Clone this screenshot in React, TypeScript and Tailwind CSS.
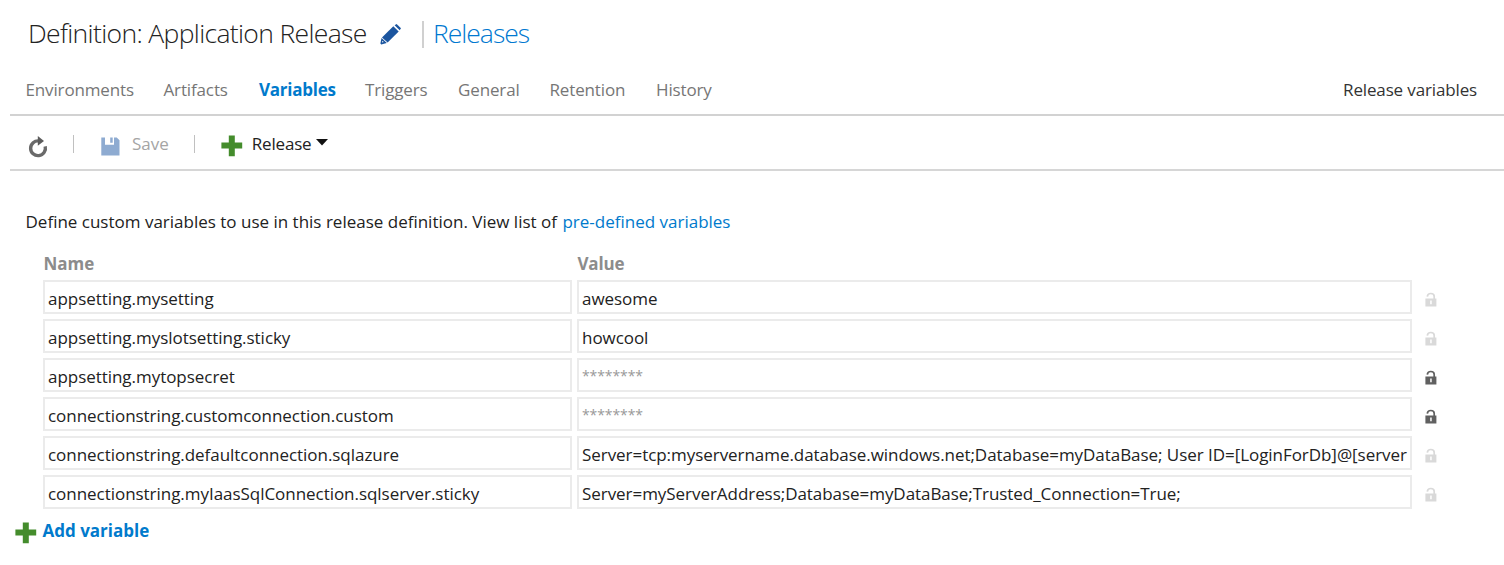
import React from "react";

const tabs = [
  { label: "Environments", cls: "w-[138px]" },
  { label: "Artifacts", cls: "w-[95.5px]" },
  { label: "Variables", cls: "w-[106px]", active: true },
  { label: "Triggers", cls: "w-[93px]" },
  { label: "General", cls: "w-[91.5px]" },
  { label: "Retention", cls: "w-[106.5px]" },
  { label: "History", cls: "w-[60px]" },
];

const rows = [
  { name: "appsetting.mysetting", value: "awesome" },
  { name: "appsetting.myslotsetting.sticky", value: "howcool" },
  { name: "appsetting.mytopsecret", value: "********", secret: true },
  { name: "connectionstring.customconnection.custom", value: "********", secret: true },
  {
    name: "connectionstring.defaultconnection.sqlazure",
    value: "Server=tcp:myservername.database.windows.net;Database=myDataBase; User ID=[LoginForDb]@[server",
  },
  {
    name: "connectionstring.myIaasSqlConnection.sqlserver.sticky",
    value: "Server=myServerAddress;Database=myDataBase;Trusted_Connection=True;",
  },
];

function Pencil() {
  return (
    <svg className="mt-[23px] ml-[13px] h-[22px] w-[22px] shrink-0" viewBox="0 0 22 22" fill="#1b559f">
      <path d="M14.6 2.2 16.6.9l4.4 4.4-1.3 2-5.1-5.1z" />
      <path d="m13.3 3.2 5.4 5.4L7.6 19.6l-5.6-5.2z" />
      <path fillRule="evenodd" d="m1.5 15 5.3 5.1-5.6 1.3-.8-.8zm.9 2.7-.4 1.7 1.7-.5z" />
    </svg>
  );
}

function Plus() {
  return (
    <svg className="h-[22px] w-[22px] shrink-0" viewBox="0 0 22 22" fill="#448c2c">
      <path d="M7.8.6h6v7h7.4v6h-7.4v7.6h-6v-7.6H.4v-6h7.4z" />
    </svg>
  );
}

function Refresh() {
  return (
    <svg className="mt-[20px] h-[22px] w-[20px] shrink-0" viewBox="0 0 20 22" fill="none">
      <path d="M11 4.9A7.4 7.4 0 1 0 17.2 10.4" stroke="#6a6a6a" strokeWidth="3.4" />
      <path d="M9.8 0 16 5 9.8 9.8z" fill="#5c5c5c" />
    </svg>
  );
}

function Disk() {
  return (
    <svg className="mt-[21px] h-[19px] w-[19px] shrink-0" viewBox="0 0 19 19" fill="#8eabd1">
      <path fillRule="evenodd" d="M.3.5H4v7.2h9V.5h2.7l2.8 2.8v15.2H.3zM9.2.5h2.5v5.2H9.2z" />
    </svg>
  );
}

function Lock({ dark }: { dark?: boolean }) {
  return (
    <svg
      className={"mt-[12px] ml-[13px] h-[15px] w-[12px] shrink-0 " + (dark ? "text-[#606060]" : "text-[#d9d9d9]")}
      viewBox="0 0 12 15"
      fill="none"
    >
      <path d="M2.3 4.6C2.5 2.2 4 1.5 5.8 1.5S9.2 2.5 9.2 4.4V7" stroke="currentColor" strokeWidth="1.7" />
      <path fillRule="evenodd" d="M.4 6.6h11v8H.4zM5.2 8.4v3.8h1.5V8.4z" fill="currentColor" />
    </svg>
  );
}

export default function App() {
  return (
    <div className="h-[565px] w-[1504px] overflow-hidden bg-white font-['Open_Sans',sans-serif] text-[17px] leading-6 whitespace-nowrap text-[#222]">
      <header className="flex h-[76px] pl-[28px]">
        <h1 className="mt-[15px] w-[339px] text-[26.5px] leading-9 font-light tracking-[-0.65px] text-[#222]">
          Definition: Application Release
        </h1>
        <Pencil />
        <div className="mt-[21px] ml-[20px] h-[27px] w-[2px] bg-[#d0d0d0]" />
        <a className="mt-[15px] ml-[9px] text-[26.5px] leading-9 font-light tracking-[-1px] text-[#0078d0]">Releases</a>
      </header>

      <nav className="flex h-[38px] pt-[2px] pl-[25.5px]">
        {tabs.map((t) => (
          <span
            key={t.label}
            className={t.cls + (t.active ? " font-bold tracking-[-0.25px] text-[#007acc]" : " tracking-[-0.14px] text-[#767676]")}
          >
            {t.label}
          </span>
        ))}
        <span className="mr-[27px] ml-auto tracking-[-0.14px] text-[#333]">Release variables</span>
      </nav>

      <div className="ml-[10px] flex h-[57px] border-y-2 border-t-[#d2d2d2] border-b-[#d6d6d6] pl-[18px]">
        <Refresh />
        <div className="mt-[19px] ml-[25px] h-[18px] w-px bg-[#c0c0c0]" />
        <div className="ml-[27px] flex">
          <Disk />
          <span className="mt-[16px] ml-[12px] text-[#a5a5a5]">Save</span>
        </div>
        <div className="mt-[19px] ml-[25px] h-[18px] w-px bg-[#c0c0c0]" />
        <div className="ml-[26px] flex">
          <div className="mt-[19px]">
            <Plus />
          </div>
          <span className="mt-[16px] ml-[9px] w-[64px] tracking-[-0.2px]">Release</span>
          <svg className="mt-[23px] h-[7px] w-[12px]" viewBox="0 0 12 7" fill="#111">
            <path d="M0 0h12L6 6.5z" />
          </svg>
        </div>
      </div>

      <main>
        <p className="mt-[39px] pl-[25.5px]">
          Define custom variables to use in this release definition. View list of{" "}
          <a className="ml-[1px] text-[#007acc]">pre-defined variables</a>
        </p>
        <div className="mt-[18px] flex pl-[43.5px] font-bold text-[#8c8c8c]">
          <span className="w-[534px]">Name</span>
          <span className="tracking-[-0.2px]">Value</span>
        </div>
        <div className="mt-[4px] flex flex-col gap-[5px] pl-[43px]">
          {rows.map((r) => (
            <div key={r.name} className="flex h-[34px]">
              <div className="h-[34px] w-[529px] overflow-hidden border-2 border-[#ebebeb] pt-[5px] pl-[3px] tracking-[-0.04px]">
                {r.name}
              </div>
              <div
                className={
                  "ml-[5px] h-[34px] w-[835px] border-2 border-[#ebebeb] pl-[3px] " +
                  (r.secret ? "pt-[4px] text-[14px] tracking-[-0.1px] text-[#999]" : "pt-[5px] tracking-[-0.05px]")
                }
              >
                {r.value}
              </div>
              <Lock dark={r.secret} />
            </div>
          ))}
        </div>
        <div className="mt-[9px] flex pl-[15px]">
          <div className="mt-[4px]">
            <Plus />
          </div>
          <a className="mt-px ml-[5.5px] font-bold text-[#007acc]">Add variable</a>
        </div>
      </main>
    </div>
  );
}
